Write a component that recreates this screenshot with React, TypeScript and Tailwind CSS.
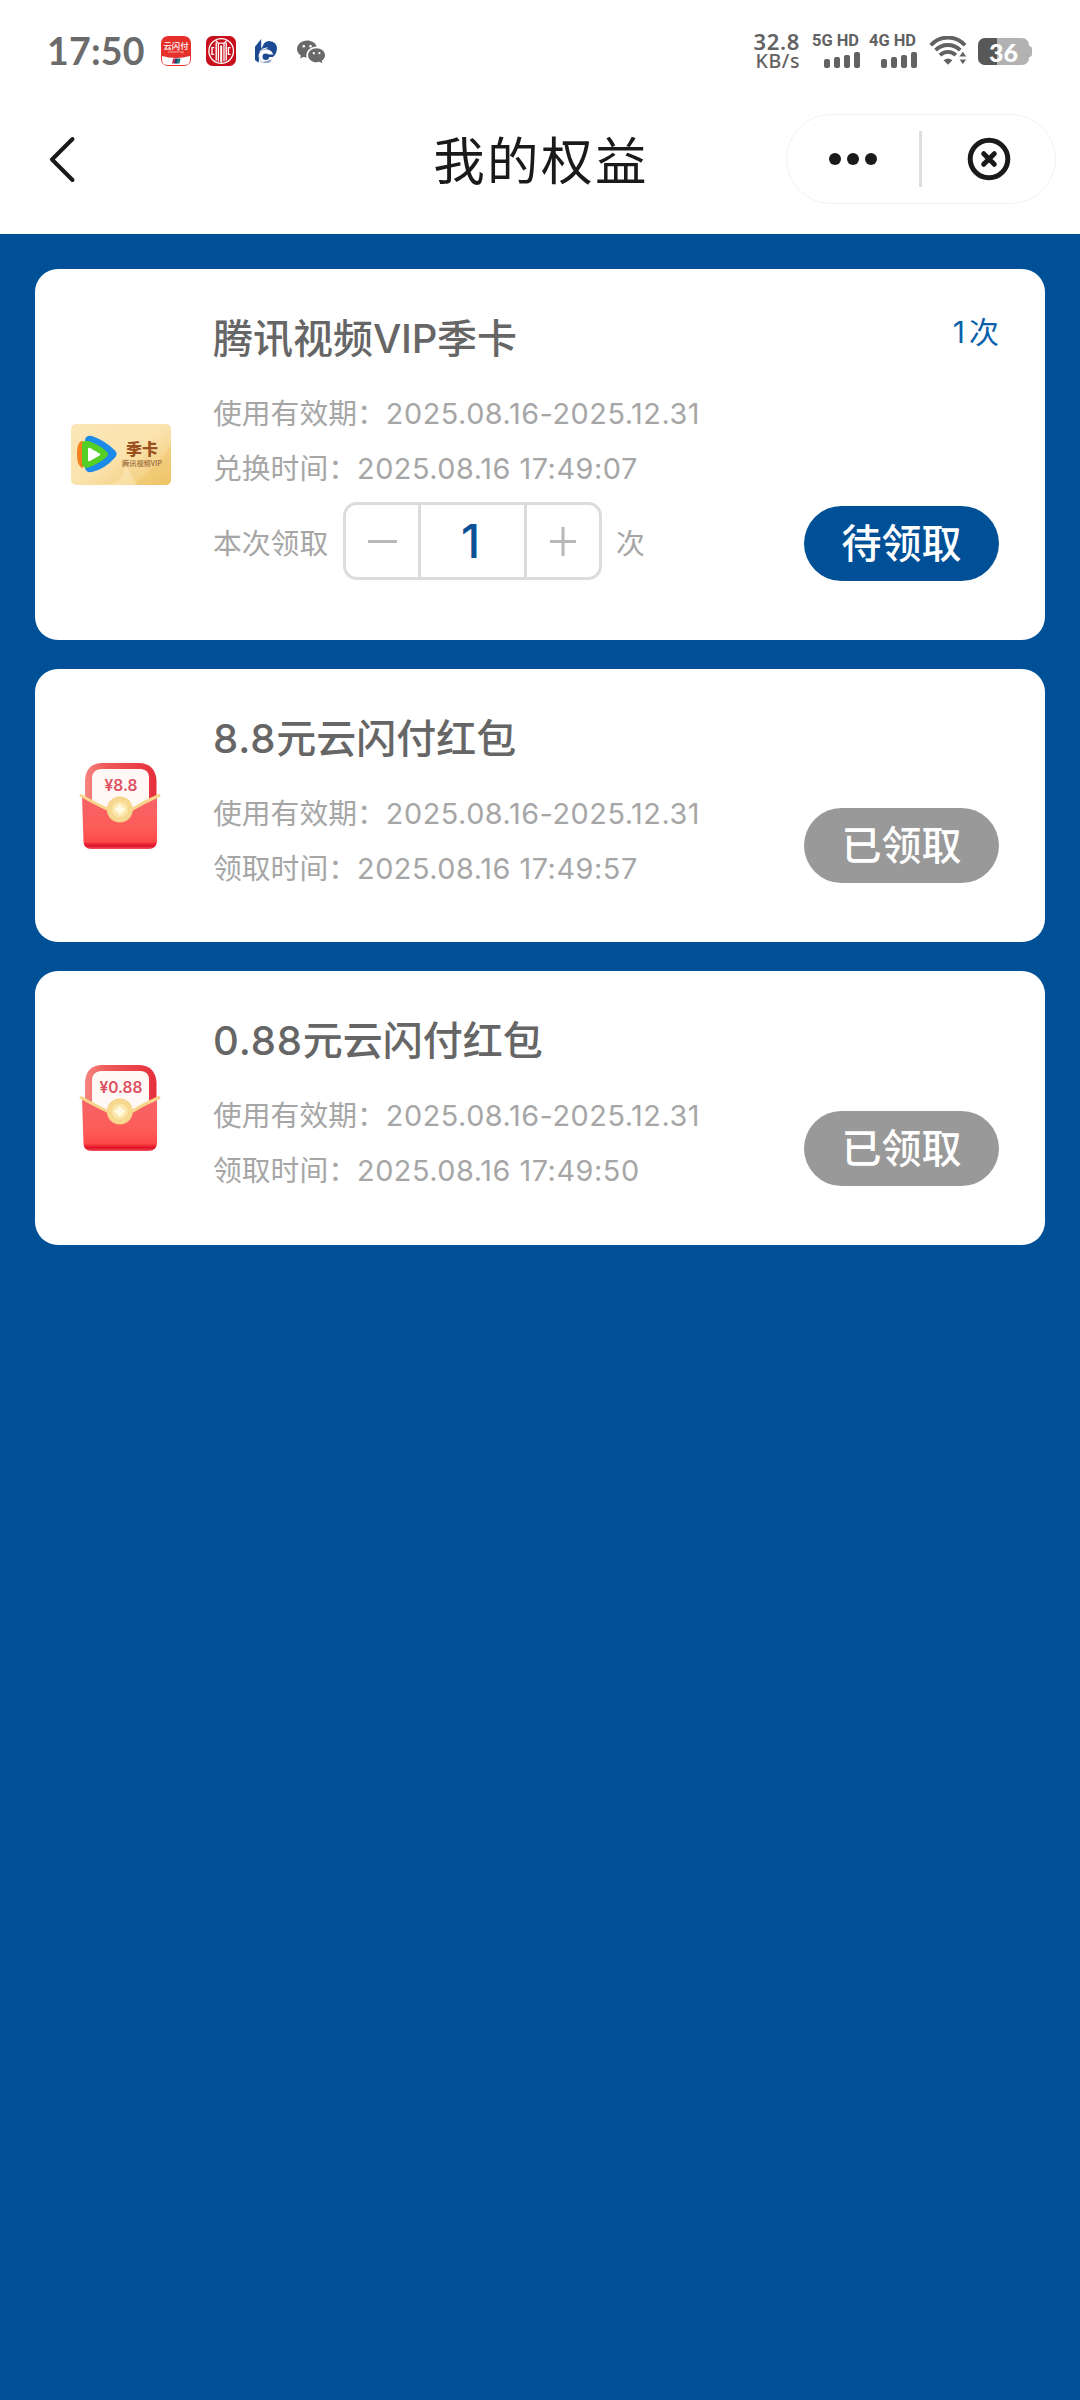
import React from 'react';
import { BsWechat } from 'react-icons/bs';

function UnionPayIcon() {
  return (
    <svg className="h-[30px] w-[30px]" viewBox="0 0 30 30">
      <defs>
        <clipPath id="upClip"><rect width="30" height="30" rx="7" /></clipPath>
      </defs>
      <g clipPath="url(#upClip)">
        <rect width="30" height="30" fill="#e5302c" />
        <path d="M1 20 Q15 24 29 20 V23.5 Q28.8 29 23.5 29 H6.500 Q1.200 29 1 23.500Z" fill="#fff" />
        <path d="M12.2 22.6h3l-1.200 4.800h-3z" fill="#c42a50" />
        <path d="M14.600 22.600h2.600l-1.200 4.800h-2.600z" fill="#203f6c" />
        <path d="M16.800 22.600h2.800l-1.200 4.800h-2.800z" fill="#137a78" />
      </g>
      <text x="15" y="12.800" fontSize="8.400" fontWeight="500" textAnchor="middle" fill="#fff" fontFamily="'Noto Sans CJK SC', sans-serif">云闪付</text>
      <text x="15" y="17.400" fontSize="3.600" textAnchor="middle" fill="#ffd2cc" fontFamily="'Liberation Sans', sans-serif">UnionPay</text>
    </svg>
  );
}

function CiticIcon() {
  return (
    <svg className="h-[30px] w-[30px]" viewBox="0 0 30 30" fill="none" stroke="#fff">
      <rect width="30" height="30" rx="6.500" fill="#c8101c" stroke="none" />
      <circle cx="15.200" cy="15" r="12.300" strokeWidth="1.300" />
      <path d="M9.800 4.500 L12.400 7.400 V25.500 M20.600 4.500 L18 7.400 V25.500" strokeWidth="1.300" />
      <path d="M10.200 6.500V24.500M20.200 6.500V24.500" strokeWidth="1.400" />
      <path d="M15.200 9.500V26.500" strokeWidth="2" />
      <path d="M12 7.200 H18.400" strokeWidth="1.200" />
      <path d="M8.200 11.600 H6 V18.400 H8.200 M24.600 11.600 H22.400 V18.400 H24.600" strokeWidth="1.400" />
    </svg>
  );
}

function BankIcon() {
  return (
    <svg className="h-[24px] w-[22px]" viewBox="0 0 22 24" fill="#1c4a92">
      <path d="M6.200 0 V10 L9 4.600 Q10.500 2 14 2 Q22 2.600 22 10 Q21.800 14 19 17 H4.400 L3.600 23.800 L0 21 V7.800Z" />
      <circle cx="11" cy="17.600" r="7.400" fill="#fff" />
      <path d="M4.600 12.800 Q7.500 9 12.500 8.800" stroke="#fff" strokeWidth="1" fill="none" />
      <path d="M16.800 20.400 A6 6 0 0 1 7 23 Q4 20 5.200 16 Q3.600 20.500 6.400 23.600" opacity=".5" />
      <circle cx="10.800" cy="17.700" r="3.300" />
      <path d="M11 15.600h8.800l-1.800 2.300h-6z" />
    </svg>
  );
}

function SignalBars() {
  return (
    <div className="flex items-end gap-[4px]">
      <div className="h-[9px] w-[6px] rounded-[2px] bg-[#626262]" />
      <div className="h-[11px] w-[6px] rounded-[2px] bg-[#626262]" />
      <div className="h-[13px] w-[6px] rounded-[2px] bg-[#626262]" />
      <div className="h-[16px] w-[6px] rounded-[2px] bg-[#626262]" />
    </div>
  );
}

function Network({ label }: { label: string }) {
  return (
    <div className="flex h-[38px] w-[48px] flex-col items-end justify-between pb-[2px]">
      <svg className="h-[19px] w-[48px]" viewBox="0 0 48 19">
        <text x="0" y="14" fontSize="16.500" fontWeight="700" textLength="47" lengthAdjust="spacingAndGlyphs" fill="#626262" fontFamily="Roboto, sans-serif">{label}</text>
      </svg>
      <SignalBars />
    </div>
  );
}

function WifiIcon() {
  return (
    <svg className="h-[30px] w-[38px]" viewBox="0 0 38 30" fill="none" stroke="#626262" strokeWidth="3.900">
      <path d="M1.800 9.200 A23 23 0 0 1 36 9.200" />
      <path d="M6.600 14.200 A17 17 0 0 1 31.200 14.200" />
      <path d="M11 19.200 A11 11 0 0 1 26.800 19.200" />
      <path d="M14.600 24.200 Q19 21 23.400 24.200 L19 28.800Z" fill="#626262" stroke="none" />
      <path d="M33.800 15 L38 21 H29.600Z M29.800 23 H38 L33.800 28.800Z" fill="#626262" stroke="#fff" strokeWidth="1" />
    </svg>
  );
}

function Battery() {
  return (
    <div className="flex items-center">
      <div className="relative h-[27px] w-[51px] rounded-[7px] bg-[#b2b2b2]">
        <div className="h-full w-[19px] rounded-l-[7px] bg-[#585858]" />
        <span className="absolute -top-[2px] left-0 w-[51px] text-center font-[Lato] text-[25px] font-black leading-[32px] text-white">36</span>
      </div>
      <div className="h-[11px] w-[3px] rounded-r-[3px] bg-[#b2b2b2]" />
    </div>
  );
}

function StatusBar() {
  return (
    <div className="flex h-[102px] items-center pl-[47px] pr-[48px]">
      <span className="w-[98px] whitespace-nowrap font-[Lato] text-[37.500px] font-bold leading-[44px] tracking-[0.200px] text-[#6b6b6b]">17:50</span>
      <div className="ml-[16px] flex items-center">
        <UnionPayIcon />
        <div className="ml-[15px]"><CiticIcon /></div>
        <div className="ml-[19px]"><BankIcon /></div>
        <BsWechat className="ml-[20px] h-[28px] w-[28px] text-[#696969]" />
      </div>
      <div className="ml-auto flex items-center">
        <div className="flex w-[50px] flex-col items-end font-['Noto_Sans'] font-medium text-[#626262]">
          <span className="text-[22px] font-semibold leading-[19px] tracking-[0.700px]">32.8</span>
          <span className="text-[19.500px] leading-[19px] tracking-[0.600px]">KB/s</span>
        </div>
        <div className="ml-[12px]"><Network label="5G HD" /></div>
        <div className="ml-[9px]"><Network label="4G HD" /></div>
        <div className="ml-[12px]"><WifiIcon /></div>
        <div className="ml-[11px]"><Battery /></div>
      </div>
    </div>
  );
}

function NavBar() {
  return (
    <div className="relative flex h-[132px] items-start justify-center">
      <svg className="absolute left-[48px] top-[33px] h-[48px] w-[30px]" viewBox="0 0 30 48" fill="none" stroke="#1a1a1a" strokeWidth="4" strokeLinecap="round" strokeLinejoin="round">
        <path d="M24.500 4 L4 24.500 L24.500 45" />
      </svg>
      <h1 className="mt-[23px] pl-[2px] text-[51.500px] font-normal leading-[72px] tracking-[2.400px] text-[#1a1a1a]">我的权益</h1>
      <div className="absolute left-[786px] top-[12px] flex h-[90px] w-[270px] items-center rounded-full border-[1.500px] border-[#f2f2f2]">
        <div className="flex w-[132px] items-center justify-center gap-[6px]">
          <i className="h-[12px] w-[12px] rounded-full bg-[#1a1a1a]" />
          <i className="h-[12px] w-[12px] rounded-full bg-[#1a1a1a]" />
          <i className="h-[12px] w-[12px] rounded-full bg-[#1a1a1a]" />
        </div>
        <div className="h-[56px] w-[3px] bg-[#dedede]" />
        <div className="flex flex-1 items-center justify-center">
          <svg className="h-[44px] w-[44px]" viewBox="0 0 44 44" fill="none" stroke="#1a1a1a" strokeWidth="5" strokeLinecap="round">
            <circle cx="22" cy="22" r="18.800" />
            <path d="M16.700 16.700 L27.300 27.300 M27.300 16.700 L16.700 27.300" />
          </svg>
        </div>
      </div>
    </div>
  );
}

function VideoCardArt() {
  return (
    <svg className="h-[61px] w-[100px]" viewBox="0 0 100 61">
      <defs>
        <linearGradient id="gold" x1="0" y1="0" x2="1" y2="1">
          <stop offset="0" stopColor="#fbe6b8" />
          <stop offset="0.5" stopColor="#fbe3ae" />
          <stop offset="1" stopColor="#f0c568" />
        </linearGradient>
        <clipPath id="goldClip"><rect width="100" height="61" rx="5" /></clipPath>
      </defs>
      <g clipPath="url(#goldClip)">
        <rect width="100" height="61" fill="url(#gold)" />
        <path d="M62 61 Q80 48 100 22 V61Z" fill="#eebf60" opacity=".35" />
        <path d="M36 61 Q54 58 54 40 L66 61Z" fill="#fff3d4" opacity=".35" />
      </g>
      <path d="M12 17 Q6 17 6 30 Q6 43 12 44Z" fill="#f5801e" />
      <path d="M14 16 Q15 11 21 12 Q35 17 44.500 27 Q47 30.500 44 33.500 Q34 45 21 48 Q15 49 14 44Z" fill="#1c8ae8" />
      <path d="M11 20 Q12 15.500 17.500 17 Q29 21 36 28 Q38 30 36 32.500 Q28 40 17 43.500 Q12 44.500 11 40Z" fill="#55cf25" />
      <path d="M17 25 Q17 23 19 24 L28.500 29.500 Q30 30.500 28.500 31.500 L19 37 Q17 38 17 36Z" fill="#fff" />
      <text x="71" y="31" fontSize="16" fontWeight="900" textAnchor="middle" fill="#9a4f1c" fontFamily="'Noto Sans CJK SC', sans-serif">季卡</text>
      <text x="71" y="42" fontSize="7.200" fontWeight="500" textAnchor="middle" textLength="40" fill="#9a6a3a" fontFamily="'Noto Sans CJK SC', sans-serif">腾讯视频VIP</text>
    </svg>
  );
}

function RedEnvelope({ amount, id }: { amount: string; id: string }) {
  return (
    <svg className="h-[88px] w-[100px]" viewBox="0 0 100 88">
      <defs>
        <linearGradient id={`${id}back`} x1="0" y1="0" x2="1" y2="0">
          <stop offset="0" stopColor="#f6857f" />
          <stop offset="0.3" stopColor="#ee5a5a" />
          <stop offset="1" stopColor="#e62f3c" />
        </linearGradient>
        <linearGradient id={`${id}front`} x1="0" y1="0" x2="0" y2="1">
          <stop offset="0" stopColor="#f5646a" />
          <stop offset="0.6" stopColor="#fd5c58" />
          <stop offset="0.86" stopColor="#fb4a49" />
          <stop offset="0.94" stopColor="#df0f24" />
          <stop offset="1" stopColor="#ef5560" />
        </linearGradient>
        <radialGradient id={`${id}seal`}>
          <stop offset="0" stopColor="#fffbe0" />
          <stop offset="0.5" stopColor="#fbe6a8" />
          <stop offset="1" stopColor="#f5d285" />
        </radialGradient>
      </defs>
      <path d="M14 40 V18 Q15 2 30 1 H69 Q84 2 85.500 18 V40Z" fill={`url(#${id}back)`} />
      <path d="M21 50 V15 Q22 7.500 30 7 H70 Q77.500 7.500 78 15 V50Z" fill="#fff8f5" />
      <path d="M11 34 L36 48 Q49 62 62 48 L86 34 V80 Q85 86.500 78 87 H20 Q13 86.500 12.500 80Z" fill={`url(#${id}front)`} />
      <path d="M10 33.500 Q25 42 37 47.500 M61 47.500 Q73 40 88 33.500" stroke="#f8d48a" strokeWidth="3" strokeLinecap="round" fill="none" />
      <circle cx="48.800" cy="47.500" r="13" fill={`url(#${id}seal)`} />
      <circle cx="48.800" cy="47.500" r="9" fill="none" stroke="#f3c873" strokeWidth="0.800" opacity=".7" />
      <path d="M48.800 41.500 L50.800 45.500 L54.800 47.500 L50.800 49.500 L48.800 53.500 L46.800 49.500 L42.800 47.500 L46.800 45.500Z" fill="#fffbe6" />
      <text x="50" y="28.800" fontSize="15.500" fontWeight="600" textAnchor="middle" fill="#dd4f60" fontFamily="Inter, sans-serif">{amount}</text>
    </svg>
  );
}

function Detail({ label, value }: { label: string; value: string }) {
  return (
    <p className="h-[55px] whitespace-nowrap text-[28.800px] leading-[55px] text-[#a6a6a6]">
      {label}：<span className="tracking-[0.550px]">{value}</span>
    </p>
  );
}

function Stepper() {
  return (
    <div className="mt-[6px] flex h-[78px] items-center text-[28.800px] leading-[55px] text-[#a6a6a6]">
      <span className="w-[130px] pt-[4px]">本次领取</span>
      <div className="flex h-[78px] w-[259px] rounded-[14px] border-[3px] border-[#dcdcdc]">
        <div className="flex w-[75px] items-center justify-center border-r-[3px] border-[#dcdcdc]">
          <div className="h-[3px] w-[29px] bg-[#b8b8b8]" />
        </div>
        <div className="flex-1 pr-[4px] text-center text-[46px] font-medium leading-[73px] text-[#0b5196]">1</div>
        <div className="flex w-[75px] items-center justify-center border-l-[3px] border-[#dcdcdc]">
          <svg className="h-[29px] w-[26px]" viewBox="0 0 26 29" stroke="#b8b8b8" strokeWidth="3">
            <path d="M0 14.500H26M13 0V29" />
          </svg>
        </div>
      </div>
      <span className="ml-[14px] pt-[4px]">次</span>
    </div>
  );
}

type CardProps = {
  art: React.ReactNode;
  title: React.ReactNode;
  height: string;
  count?: string;
  action: string;
  actionColor: string;
  children: React.ReactNode;
};

function BenefitCard({ art, title, height, count, action, actionColor, children }: CardProps) {
  return (
    <section className={`flex rounded-[23px] bg-white pl-[36px] pr-[46px] ${height}`}>
      <div className="flex w-[142px] items-center">{art}</div>
      <div className="flex-1 pt-[40px]">
        <h2 className="mb-[17px] h-[60px] whitespace-nowrap text-[40px] font-medium leading-[60px] text-[#666]">{title}</h2>
        {children}
      </div>
      <div className="flex flex-col items-end justify-between pb-[59px] pt-[42px]">
        <span className="text-[30px] leading-[42px] text-[#0a60aa]">{count && <><span className="mr-[4px]">{count}</span>次</>}</span>
        <button className={`h-[75px] w-[195px] rounded-full text-[40px] font-medium leading-[74px] text-white ${actionColor}`}>{action}</button>
      </div>
    </section>
  );
}

export default function App() {
  return (
    <div className="h-[2400px] w-[1080px] overflow-hidden bg-[#005097] font-[Inter,'Noto_Sans_CJK_SC',sans-serif]">
      <header className="h-[234px] bg-white">
        <StatusBar />
        <NavBar />
      </header>
      <main className="flex flex-col gap-[29px] px-[35px] pt-[35px]">
        <BenefitCard art={<VideoCardArt />} title={<>腾讯视频<span className="font-[450] tracking-[-0.300px]">VIP</span>季卡</>} height="h-[371px]" count="1" action="待领取" actionColor="bg-[#005097]">
          <Detail label="使用有效期" value="2025.08.16-2025.12.31" />
          <Detail label="兑换时间" value="2025.08.16 17:49:07" />
          <Stepper />
        </BenefitCard>
        <BenefitCard art={<RedEnvelope amount="¥8.8" id="a" />} title={<><span className="font-[450] tracking-[0.900px]">8.8</span>元云闪付红包</>} height="h-[273px]" action="已领取" actionColor="bg-[#999]">
          <Detail label="使用有效期" value="2025.08.16-2025.12.31" />
          <Detail label="领取时间" value="2025.08.16 17:49:57" />
        </BenefitCard>
        <BenefitCard art={<RedEnvelope amount="¥0.88" id="b" />} title={<><span className="font-[450] tracking-[0.900px]">0.88</span>元云闪付红包</>} height="h-[274px]" action="已领取" actionColor="bg-[#999]">
          <Detail label="使用有效期" value="2025.08.16-2025.12.31" />
          <Detail label="领取时间" value="2025.08.16 17:49:50" />
        </BenefitCard>
      </main>
    </div>
  );
}
